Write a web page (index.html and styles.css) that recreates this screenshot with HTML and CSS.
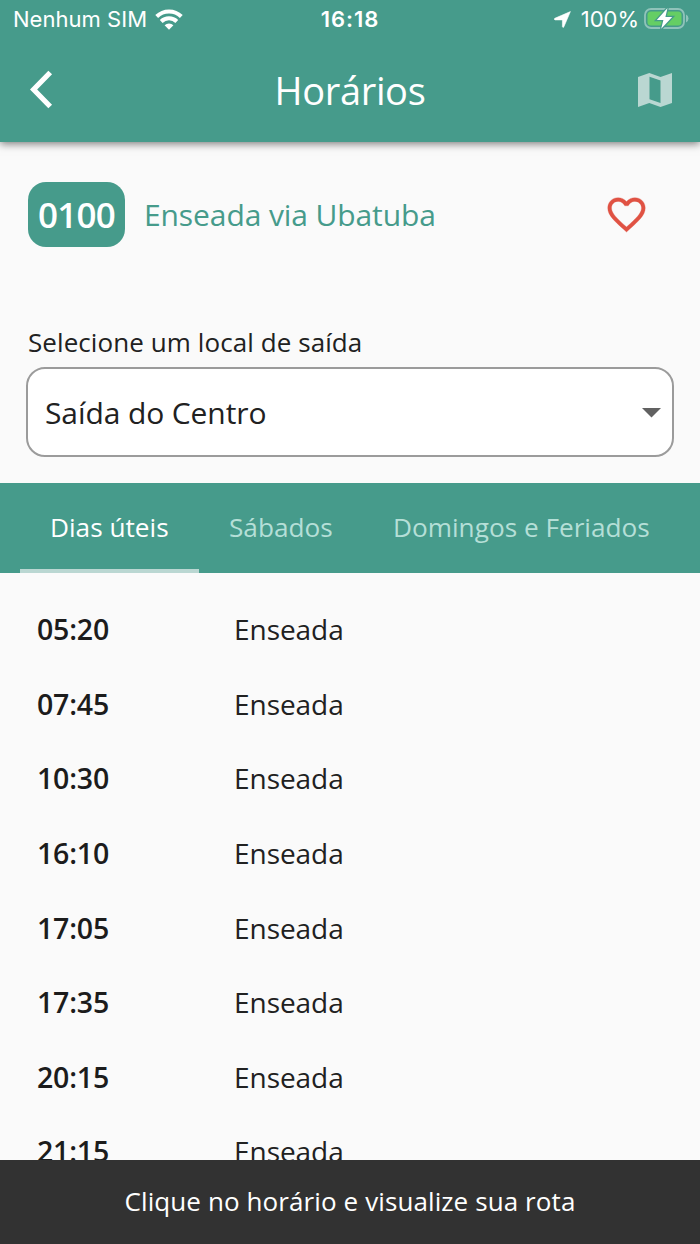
FILE: index.html
```html
<!DOCTYPE html>
<html lang="pt-BR">
<head>
<meta charset="utf-8">
<title>Horários</title>
<link rel="stylesheet" href="styles.css">
</head>
<body>
<div class="app">
  <header class="header">
    <div class="status">
      <div class="status-left">
        <span class="carrier">Nenhum SIM</span>
        <svg class="wifi" width="28" height="21" viewBox="0 0 28 21">
          <g fill="none" stroke="#fff" stroke-width="4">
            <path d="M1.700 7.500a17.500 17.500 0 0 1 24.600 0"/>
            <path d="M6.200 12.500a11.200 11.200 0 0 1 15.600 0"/>
          </g>
          <path d="M9.600 16.200a6.600 6.600 0 0 1 8.800 0L14 20.700z" fill="#fff"/>
        </svg>
      </div>
      <span class="clock">16:18</span>
      <div class="status-right">
        <svg class="location" width="17" height="17" viewBox="0 0 17 17"><path d="M16.400.6 9.800 15.900q-.9 1.200-1.400-.2V8.900H1.300Q-.6 8.400.8 7.300z" fill="#fff" stroke="#fff" stroke-width=".6"/></svg>
        <span class="percent">100%</span>
        <svg class="battery" width="45" height="24" viewBox="0 0 45 24">
          <rect x="1" y="2" width="39" height="19" rx="6" fill="none" stroke="#90c3ba" stroke-width="1.800"/>
          <rect x="3.500" y="4.500" width="34" height="14" rx="3.500" fill="#65ce64"/>
          <path d="M42 7.500q2.500 1 2.500 4t-2.500 4z" fill="#90c3ba"/>
          <path d="M23.500 1 12.800 13h6.600l-2.200 8.800L28.200 10h-6.800z" fill="#fff" stroke="#469b8b" stroke-width="2.600" paint-order="stroke"/>
        </svg>
      </div>
    </div>
    <div class="toolbar">
      <svg class="back" width="24" height="40" viewBox="0 0 24 40"><path d="M20.200 2.500 3.600 19.500l16.600 17" fill="none" stroke="#fff" stroke-width="5.200"/></svg>
      <h1 class="title">Horários</h1>
      <svg class="map" width="34" height="34" viewBox="0 0 34 34"><path fill="#bad7d2" fill-rule="evenodd" d="M0 4 11.300 0l11.200 4L34 0v30l-11.500 4-11.200-4L0 34zM11.500 3.800v22.400l11 3.900V7.600z"/></svg>
    </div>
  </header>

  <section class="route">
    <span class="badge">0100</span>
    <span class="route-name">Enseada via Ubatuba</span>
    <svg class="heart" width="45" height="45" viewBox="0 0 24 24"><path fill="#e05243" stroke="#e05243" stroke-width=".15" d="M16.500 3c-1.740 0-3.410.81-4.500 2.090C10.910 3.810 9.240 3 7.500 3 4.420 3 2 5.420 2 8.500c0 3.780 3.400 6.860 8.550 11.540L12 21.350l1.450-1.320C18.600 15.360 22 12.280 22 8.500 22 5.420 19.580 3 16.500 3zm-4.400 15.550l-.1.100-.1-.1C7.140 14.240 4 11.390 4 8.500 4 6.500 5.500 5 7.500 5c1.540 0 3.040.99 3.570 2.360h1.870C13.460 5.990 14.960 5 16.500 5c2 0 3.500 1.500 3.500 3.500 0 2.890-3.140 5.740-7.900 10.050z"/></svg>
  </section>

  <section class="departure">
    <label class="label">Selecione um local de saída</label>
    <div class="select">
      <span class="select-value">Saída do Centro</span>
      <svg class="caret" width="19" height="10" viewBox="0 0 19 10"><path d="M0 0h19L9.500 9.500z" fill="#616161"/></svg>
    </div>
  </section>

  <nav class="tabs">
    <div class="tab tab-active">Dias úteis</div>
    <div class="tab tab-sat">Sábados</div>
    <div class="tab">Domingos e Feriados</div>
  </nav>

  <main class="list">
    <div class="row"><span class="time">05:20</span><span class="place">Enseada</span></div>
    <div class="row"><span class="time">07:45</span><span class="place">Enseada</span></div>
    <div class="row"><span class="time">10:30</span><span class="place">Enseada</span></div>
    <div class="row"><span class="time">16:10</span><span class="place">Enseada</span></div>
    <div class="row"><span class="time">17:05</span><span class="place">Enseada</span></div>
    <div class="row"><span class="time">17:35</span><span class="place">Enseada</span></div>
    <div class="row"><span class="time">20:15</span><span class="place">Enseada</span></div>
    <div class="row"><span class="time">21:15</span><span class="place">Enseada</span></div>
  </main>

  <footer class="snackbar"><span class="hint">Clique no horário e visualize sua rota</span></footer>
</div>
</body>
</html>
```
FILE: styles.css
```css
* { box-sizing: border-box; }
body { margin: 0; background: #fafafa; }
.app {
  width: 700px;
  height: 1244px;
  display: flex;
  flex-direction: column;
  overflow: hidden;
  background: #fafafa;
  color: #212121;
  font-family: "Open Sans", "Noto Sans", sans-serif;
  white-space: nowrap;
}
svg { display: block; flex: none; }

.header {
  flex: none;
  height: 142px;
  background: #469b8b;
  color: #fff;
  box-shadow: 0 2px 8px rgba(0, 0, 0, .5);
}
.status {
  height: 38px;
  display: grid;
  grid-template-columns: 1fr auto 1fr;
  align-items: center;
  padding: 0 11px 0 13px;
  font-family: Inter, sans-serif;
  font-size: 22px;
}
.status-left, .status-right { display: flex; align-items: center; }
.status-left { gap: 8px; }
.status-right { justify-content: flex-end; }
.carrier { letter-spacing: .03px; }
.clock { margin-right: 2px; font-weight: 600; letter-spacing: .9px; }
.percent { margin: 0 5px 0 10px; }
.toolbar {
  height: 104px;
  display: grid;
  grid-template-columns: 1fr auto 1fr;
  align-items: center;
  padding: 0 28px 0 30px;
}
.title { margin: 0 2px 0 0; font-size: 38px; font-weight: 400; line-height: 52px; letter-spacing: -.35px; }
.map { justify-self: end; }

.route {
  flex: none;
  height: 145px;
  padding: 40px 51px 0 28px;
  display: flex;
  align-items: flex-start;
}
.badge {
  width: 97px;
  height: 65px;
  border-radius: 18px;
  background: #469b8b;
  color: #fff;
  font-size: 35px;
  font-weight: 600;
  line-height: 66px;
  letter-spacing: -.8px;
  text-align: center;
}
.route-name {
  margin-left: 19px;
  color: #469b8b;
  font-size: 30px;
  line-height: 65px;
  letter-spacing: -.1px;
}
.heart { margin: 10px 0 0 auto; }

.departure { flex: none; height: 196px; padding: 38px 26px 0; }
.label {
  display: block;
  height: 42px;
  padding-left: 2px;
  font-size: 26px;
  line-height: 35px;
  letter-spacing: .08px;
}
.select {
  height: 90px;
  padding: 0 11px 0 17px;
  border: 2px solid #9b9b9b;
  border-radius: 19px;
  background: #fff;
  display: flex;
  align-items: center;
  justify-content: space-between;
}
.select-value { font-size: 30px; letter-spacing: -.1px; }
.caret { margin-top: 2px; }

.tabs {
  flex: none;
  height: 90px;
  padding-left: 20px;
  display: flex;
  background: #469b8b;
  color: #b5dfd7;
  font-size: 26.200px;
  line-height: 88px;
}
.tab { padding-left: 30px; }
.tab-active { width: 179px; color: #fff; border-bottom: 4px solid #bad7d2; }
.tab-sat { width: 164px; }

.list { flex: 1; min-height: 0; overflow: hidden; padding-top: 19px; }
.row {
  height: 74.6px;
  padding-left: 37px;
  display: grid;
  grid-template-columns: 197px 1fr;
  align-items: center;
  font-size: 28px;
}
.time { font-size: 28.500px; font-weight: 600; letter-spacing: -.2px; color: #1c1c1c; }
.place { letter-spacing: -.05px; }

.snackbar {
  flex: none;
  height: 84px;
  background: #323232;
  color: #fff;
  font-size: 26px;
  line-height: 82px;
  letter-spacing: .1px;
  text-align: center;
}
```
